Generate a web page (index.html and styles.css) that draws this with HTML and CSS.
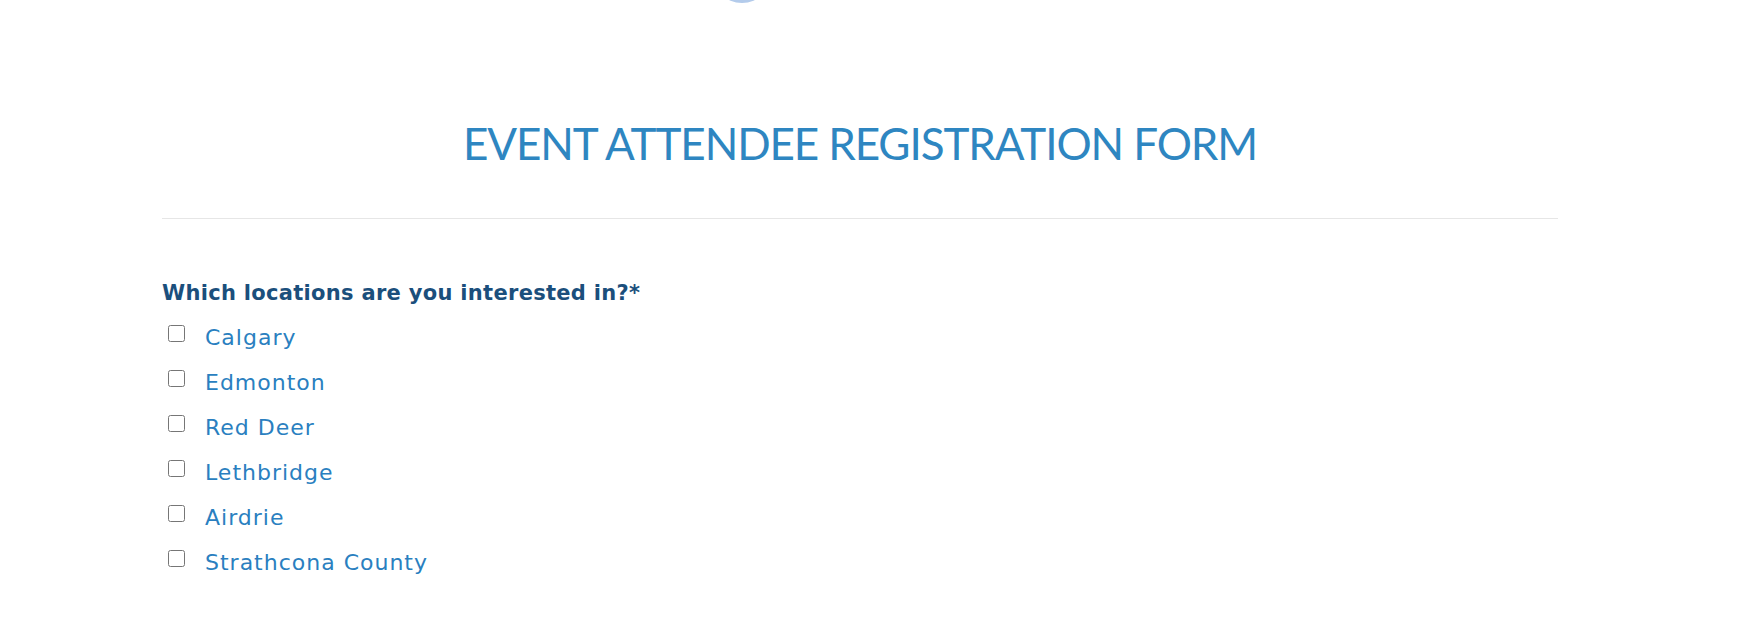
FILE: index.html
```html
<!DOCTYPE html>
<html lang="en">
<head>
    <meta charset="UTF-8">
    <title>Event Attendee Registration Form</title>
    <link rel="stylesheet" href="styles.css">
</head>
<body>
    <div class="form">
        <div class="logo"></div>
        <h1 class="title">EVENT ATTENDEE REGISTRATION FORM</h1>
        <hr class="divider">
        <div class="field">
            <div class="field-label">Which locations are you interested in?*</div>
            <label class="option"><input type="checkbox"><span>Calgary</span></label>
            <label class="option"><input type="checkbox"><span>Edmonton</span></label>
            <label class="option"><input type="checkbox"><span>Red Deer</span></label>
            <label class="option"><input type="checkbox"><span>Lethbridge</span></label>
            <label class="option"><input type="checkbox"><span>Airdrie</span></label>
            <label class="option"><input type="checkbox"><span>Strathcona County</span></label>
        </div>
    </div>
</body>
</html>
```
FILE: styles.css
```css
* {
    margin: 0; padding: 0; box-sizing: border-box;
}
body {
    background: #fff;
    overflow: hidden;
}
.form {
    width: 1396px; margin-left: 162px;
}
.logo {
    width: 60px; height: 60px; margin: -57px 0 0 550px; border-radius: 50%; background: #b3cbeb;
}
.title {
    margin-top: 110px; text-align: center; font: 400 44px/60px "Lato", "Open Sans", sans-serif; letter-spacing: -1.1px; color: #2e86c1;
}
.divider {
    margin-top: 45px; border: 0; border-top: 1px solid #e6e6e6;
}
.field {
    margin-top: 59px;
}
.field-label {
    margin-bottom: 7px; font: 700 21px/30px "DejaVu Sans", sans-serif; letter-spacing: 0.3px; color: #1b4f7c;
}
.option {
    display: flex; align-items: center; height: 45px; font: 400 22px/30px "DejaVu Sans", sans-serif; letter-spacing: 1px; color: #2a7fc0;
}
.option input {
    width: 17px; height: 17px; margin: 0 20px 8px 6px;
}
```
